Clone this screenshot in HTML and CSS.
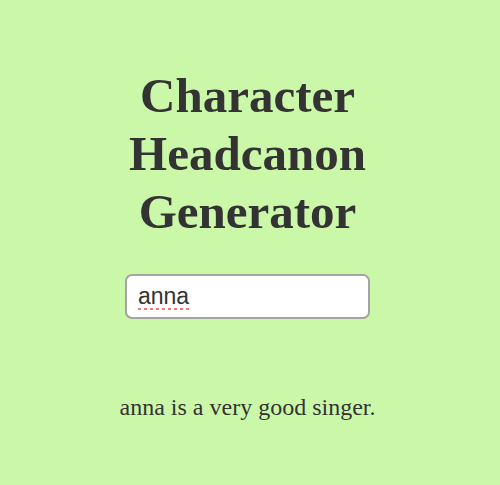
FILE: index.html
```html
<!DOCTYPE html>
<html lang="en">
<head>
<meta charset="utf-8">
<title>Character Headcanon Generator</title>
<link rel="stylesheet" href="styles.css">
</head>
<body>
  <main class="app">
    <h1 class="title">Character Headcanon Generator</h1>
    <input class="name-input" type="text" value="anna" spellcheck="false">
    <p class="result">anna is a very good singer.</p>
  </main>
</body>
</html>
```
FILE: styles.css
```css
html, body {
  margin: 0;
  padding: 0;
  background: #cbf8a8;
}

.app {
  width: 495px;
  display: flex;
  flex-direction: column;
  align-items: center;
  font-family: "Liberation Serif", "Times New Roman", serif;
  color: #333;
}

.title {
  width: 270px;
  margin: 67px 0 0;
  font-size: 49px;
  line-height: 58px;
  font-weight: bold;
  text-align: center;
}

.name-input {
  box-sizing: border-box;
  width: 245px;
  height: 45px;
  margin-top: 33px;
  padding: 0 11px;
  border: 2px solid #a4a4a4;
  border-radius: 7px;
  background: #fff;
  font-family: "Liberation Sans", Arial, sans-serif;
  font-size: 23px;
  color: #333;
  text-decoration: underline dotted #f07a72;
  text-decoration-thickness: 3px;
  text-underline-offset: 4px;
  outline: none;
}

.result {
  margin: 74px 0 0;
  font-size: 24px;
  line-height: 28px;
}
```
